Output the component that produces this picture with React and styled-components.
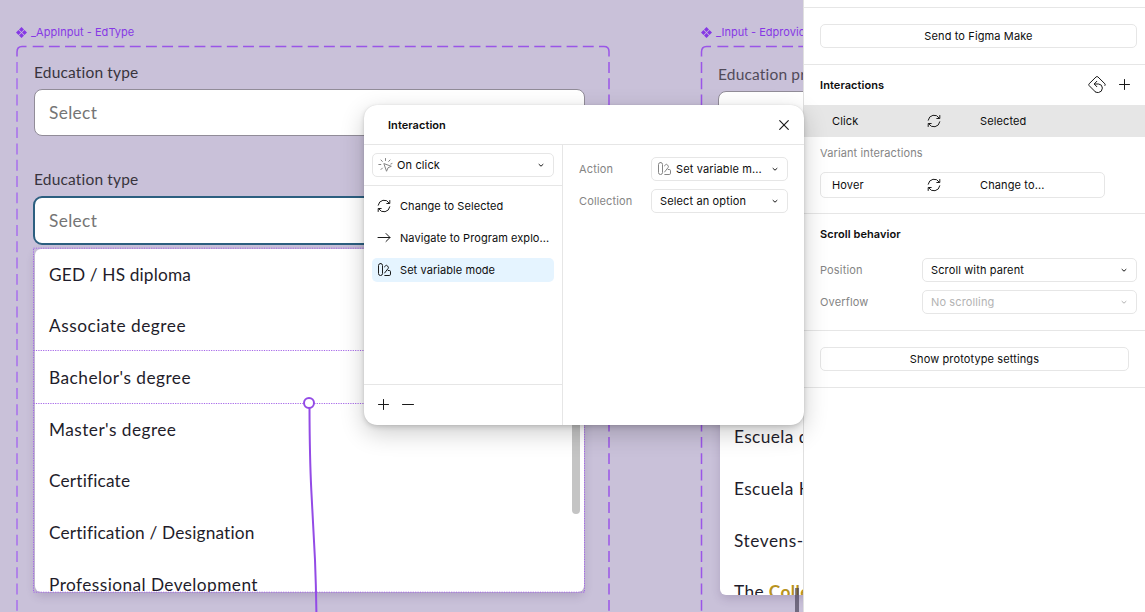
import React from 'react'
import styled, { createGlobalStyle, css } from 'styled-components'

const GlobalStyle = createGlobalStyle`
  * {
    box-sizing: border-box;
  }

  body {
    margin: 0;
    background: #ffffff;
    font-family: Inter, sans-serif;
  }

  svg {
    flex: none;
  }
`

const Editor = styled.div`
  display: flex;
  height: 612px;
  overflow: hidden;
  position: relative;
  width: 1145px;
`

const Canvas = styled.div`
  background-color: #c9c1d9;
  flex: 1;
  min-width: 0;
  overflow: hidden;
  position: relative;
`

// nodes on the free canvas
const Frame = styled.div`
  display: flex;
  flex-direction: column;
  left: ${props => props.$x}px;
  position: absolute;
  top: ${props => props.$y}px;
  width: 552px;
`

const FrameTitle = styled.div`
  align-items: center;
  color: #8638e5;
  display: flex;
  font-size: 11px;
  gap: 4px;
  left: ${props => props.$x}px;
  letter-spacing: 0.03px;
  line-height: 16px;
  position: absolute;
  top: 24px;
  white-space: nowrap;
`

const Overlay = styled.svg`
  height: 612px;
  left: 0;
  pointer-events: none;
  position: absolute;
  top: 0;
  width: 803px;
`

const FieldLabel = styled.div`
  color: ${props => props.$color || '#38343d'};
  font-family: Lato, sans-serif;
  font-size: 15.5px;
  height: 20px;
  letter-spacing: 0.17px;
  line-height: 19px;
  padding-left: 1px;
  white-space: nowrap;
`

const Field = styled.div`
  align-items: center;
  background-color: #ffffff;
  border: 1px solid #918c98;
  border-radius: 8px;
  color: #757575;
  display: flex;
  font-family: Lato, sans-serif;
  font-size: 17.3px;
  height: 47px;
  letter-spacing: 0.35px;
  margin: 6px 0 0 1px;
  padding-left: 14px;
  width: 551px;

  ${props =>
    props.$focused &&
    css`
      border: 2px solid #2c5f80;
      border-radius: 9px;
      height: 49px;
      margin-left: 0;
      width: 552px;
    `}
`

const Menu = styled.div`
  background-color: #ffffff;
  border-radius: 6px;
  box-shadow: 0 4px 10px rgba(60, 40, 90, 0.18);
  display: flex;
  height: ${props => props.$height || 343}px;
  justify-content: space-between;
  margin: 4px 0 0 2px;
  overflow: hidden;
  padding-left: 14px;
  width: 549px;
`

const Options = styled.div`
  display: flex;
  flex-direction: column;
  margin-top: ${props => props.$top || 0}px;
`

const Option = styled.div`
  align-items: center;
  color: #1f1d2b;
  display: flex;
  flex: none;
  font-family: Lato, sans-serif;
  font-size: 17.3px;
  height: 51.67px;
  letter-spacing: ${props => props.$track || 0.4}px;
  white-space: pre;

  b {
    color: #b8931e;
    font-weight: 700;
  }
`

const MenuThumb = styled.div`
  background-color: #c4c4c4;
  border-radius: 4px;
  height: 257px;
  margin: 8px 4px 0 0;
  width: 8px;
`

const CanvasThumb = styled.div`
  background-color: rgba(60, 54, 72, 0.62);
  bottom: 0;
  height: 24px;
  position: absolute;
  right: 4px;
  width: 4px;
`

const Panel = styled.div`
  background-color: #ffffff;
  border-left: 1px solid #e0e0e0;
  color: #0d0d0d;
  display: flex;
  flex-direction: column;
  font-size: 11px;
  letter-spacing: 0.12px;
  padding-top: 7px;
  width: 342px;
`

const Section = styled.div`
  border-top: 1px solid #e6e6e6;
  display: flex;
  flex-direction: column;
  padding: ${props => props.$padding || '0'};
`

const SectionHeader = styled.div`
  align-items: center;
  display: flex;
  font-weight: 600;
  height: 40px;
  justify-content: space-between;
  letter-spacing: 0.08px;
  padding: 0 8px 0 16px;
`

const HeaderActions = styled.div`
  align-items: center;
  display: flex;
  gap: 4px;
`

const Button = styled.div`
  align-items: center;
  border: 1px solid #e6e6e6;
  border-radius: 5px;
  display: flex;
  height: 24px;
  justify-content: center;
  width: ${props => props.$width}px;
`

const InteractionRow = styled.div`
  align-items: center;
  background-color: #e6e6e6;
  display: grid;
  grid-template-columns: 90px 58px 1fr;
  height: 32px;
  padding-left: 28px;

  ${props =>
    props.$outlined &&
    css`
      background-color: #ffffff;
      border: 1px solid #e6e6e6;
      border-radius: 5px;
      height: 26px;
      margin-left: 16px;
      padding-left: 11px;
      width: 285px;
    `}
`

const GroupLabel = styled.div`
  color: #858585;
  height: 35px;
  line-height: 32px;
  padding-left: 16px;
`

const Properties = styled.div`
  align-content: start;
  display: grid;
  grid-template-columns: ${props => props.$columns};
  row-gap: 8px;
  padding: ${props => props.$padding};
`

const PropertyLabel = styled.div`
  color: #858585;
  letter-spacing: 0.15px;
  line-height: 24px;
`

const Select = styled.div`
  align-items: center;
  border: 1px solid #e6e6e6;
  border-radius: 5px;
  color: ${props => (props.$disabled ? '#b3b3b3' : '#0d0d0d')};
  display: flex;
  gap: 4px;
  height: 24px;
  justify-content: space-between;
  letter-spacing: 0.13px;
  padding: 0 8px 0 ${props => (props.$icon ? 4 : 8)}px;
  white-space: nowrap;
`

const SelectText = styled.span`
  flex: 1;
`

const Dialog = styled.div`
  background-color: #ffffff;
  border-radius: 13px;
  box-shadow: 0 8px 24px rgba(0, 0, 0, 0.2), 0 2px 5px rgba(0, 0, 0, 0.15),
    0 0 1px rgba(0, 0, 0, 0.15);
  color: #0d0d0d;
  display: flex;
  flex-direction: column;
  font-size: 11px;
  height: 320px;
  left: 364px;
  letter-spacing: 0.06px;
  position: absolute;
  top: 105px;
  width: 440px;
`

const DialogHeader = styled.div`
  align-items: center;
  border-bottom: 1px solid #e6e6e6;
  display: flex;
  font-weight: 600;
  height: 40px;
  justify-content: space-between;
  padding: 0 14px 0 24px;
`

const DialogBody = styled.div`
  display: flex;
  flex: 1;
`

const ActionColumn = styled.div`
  border-right: 1px solid #e6e6e6;
  display: flex;
  flex-direction: column;
  width: 199px;
`

const Trigger = styled.div`
  border-bottom: 1px solid #e6e6e6;
  padding: 8px;
`

const ActionList = styled.div`
  display: flex;
  flex: 1;
  flex-direction: column;
  gap: 8px;
  padding: 8px;
`

const ActionItem = styled.div`
  align-items: center;
  background-color: ${props => (props.$selected ? '#e5f4ff' : 'transparent')};
  border-radius: 5px;
  display: flex;
  gap: 4px;
  height: 24px;
  letter-spacing: 0.07px;
  white-space: nowrap;
`

const ActionFooter = styled.div`
  align-items: center;
  border-top: 1px solid #e6e6e6;
  display: flex;
  height: 41px;
  padding-left: 8px;
`

const Icon = ({ children, width = 24, height = 24, color = '#1a1a1a' }) => (
  <svg
    width={width}
    height={height}
    viewBox={`0 0 ${width} ${height}`}
    fill="none"
    stroke={color}
    strokeLinecap="round"
    strokeLinejoin="round"
  >
    {children}
  </svg>
)

const Chevron = ({ color }) => (
  <Icon width={8} height={8} color={color}>
    <path d="M2 3.4 4 5.2 6 3.4" />
  </Icon>
)

const SwapIcon = () => (
  <Icon>
    <path d="M6.2 11.2A6 6 0 0 1 17.2 9M17.8 6.5V9.5H14.8M17.8 12.8A6 6 0 0 1 6.8 15M6.2 17.5V14.5H9.2" />
  </Icon>
)

const ArrowIcon = () => (
  <Icon>
    <path d="M6 11.5H18M14 7.5 18 11.5 14 15.5" />
  </Icon>
)

const ModeIcon = ({ color }) => (
  <Icon color={color}>
    <rect x="6.5" y="5.5" width="4" height="12" rx="2" />
    <path d="M12.5 8.8 13.8 7.6Q14.7 6.9 15.4 7.8L16.2 9Q16.7 9.8 16.1 10.5L12.6 15M16.2 12.5H17.3Q18.5 12.5 18.5 13.7V16.2Q18.5 17.5 17.3 17.5H12.8" />
  </Icon>
)

const ClickIcon = () => (
  <Icon color="#858585">
    <path d="M11.2 10.7 18.3 13.3 15.1 14.7 13.7 17.9Z" />
    <path d="M12.5 5.5V7.5M8 7 9.3 8.4M17 7 15.7 8.4M5.8 11.5H7.8M19 10.5 17.8 11M8 16.5 9.4 15.1" />
  </Icon>
)

const PlusIcon = () => (
  <Icon>
    <path d="M11.5 6.5V16.5M6.5 11.5H16.5" />
  </Icon>
)

const MinusIcon = () => (
  <Icon>
    <path d="M6.5 11.5H17.5" />
  </Icon>
)

const CloseIcon = () => (
  <Icon width={12} height={12}>
    <path d="M1.7 1.7 10.3 10.3M10.3 1.7 1.7 10.3" strokeWidth="1.15" />
  </Icon>
)

const ResetIcon = () => (
  <Icon>
    <path d="M10.5 19 4.1 12.6Q3.4 11.7 4.1 10.8L11.1 3.9Q12 3.1 12.9 3.9L19.9 10.8Q20.6 11.7 20 12.5" />
    <path d="M11.8 8.3 9.2 11 11.8 13.7M9.4 11H13.6Q17.4 11.5 17.4 15.1 17.1 19 13.6 19.5 11.8 19.7 10.5 19" />
  </Icon>
)

const ComponentIcon = () => (
  <svg width="11" height="11" viewBox="0 0 11 11" fill="#8638e5">
    <path d="M5.5 0 8 2.5 5.5 5 3 2.5ZM5.5 6 8 8.5 5.5 11 3 8.5ZM2.5 3 5 5.5 2.5 8 0 5.5ZM8.5 3 11 5.5 8.5 8 6 5.5Z" />
  </svg>
)

const degrees = [
  { name: 'GED / HS diploma', track: 0.15 },
  { name: 'Associate degree', track: 0.5 },
  { name: "Bachelor's degree", track: 0.47 },
  { name: "Master's degree", track: 0.45 },
  { name: 'Certificate', track: 0.17 },
  { name: 'Certification / Designation', track: 0.16 },
  { name: 'Professional Development', track: 0.43 }
]

const EducationTypeFrame = () => (
  <>
    <FrameTitle $x={16}>
      <ComponentIcon />
      _AppInput - EdType
    </FrameTitle>
    <Frame $x={33} $y={63}>
      <FieldLabel>Education type</FieldLabel>
      <Field>Select</Field>
    </Frame>
    <Frame $x={33} $y={170}>
      <FieldLabel>Education type</FieldLabel>
      <Field $focused>Select</Field>
      <Menu>
        <Options $top={-0.5}>
          {degrees.map(degree => (
            <Option key={degree.name} $track={degree.track}>
              {degree.name}
            </Option>
          ))}
        </Options>
        <MenuThumb />
      </Menu>
    </Frame>
  </>
)

const ProviderFrame = () => (
  <>
    <FrameTitle $x={701}>
      <ComponentIcon />
      _Input - Edprovider
    </FrameTitle>
    <Frame $x={717} $y={65}>
      <FieldLabel $color="#514b5a">Education provider</FieldLabel>
      <Field />
    </Frame>
    <Frame $x={718} $y={248}>
      <Menu>
        <Options $top={4}>
          <Option>Colorado State</Option>
          <Option>Columbia College</Option>
          <Option>Eastern College</Option>
          <Option>Escuela de Arte</Option>
          <Option>Escuela Hotelera</Option>
          <Option $track={0.55}>Stevens-Henager</Option>
          <Option>
            The <b>College</b>
          </Option>
        </Options>
      </Menu>
    </Frame>
  </>
)

const Guides = () => (
  <Overlay viewBox="0 0 803 612" fill="none" stroke="#9747ff">
    <g strokeWidth="1.5" stroke="#9a55e8" strokeDasharray="10.9 5.28">
      <path d="M32.7 46.4H594" />
      <path d="M717.4 46.4H803" />
      <path d="M609 62V612" strokeDasharray="10.9 5.4" />
      <path d="M701.5 62V612" strokeDasharray="10.9 5.4" />
      <path d="M17 62V612" strokeWidth="2" stroke="#b083e8" strokeDasharray="10.9 5.4" />
    </g>
    <g strokeWidth="1.5" stroke="#9a55e8">
      <path d="M17 56.6V52Q17 46.4 22 46.4H26.5" />
      <path d="M599 46.4H604Q609 46.4 609 51.5V56.6" />
      <path d="M701.5 56.6V52Q701.5 46.4 706.5 46.4H711" />
    </g>
    <g strokeWidth="1" stroke="#a566e8" strokeDasharray="1.2 1.2">
      <path d="M33.5 248.2H584.5V592.2H33.5Z" />
      <path d="M33.5 350.5H584.5M33.5 403.5H584.5" />
    </g>
    <path
      d="M309.5 408C309.6 440 310.3 470 311.3 490L315 560Q316 585 316.4 612"
      strokeWidth="2"
      stroke="#934be6"
    />
    <circle cx="309" cy="403" r="5" fill="#ffffff" strokeWidth="2" stroke="#934be6" />
  </Overlay>
)

const PrototypePanel = () => (
  <Panel>
    <Section $padding="16px">
      <Button $width={317}>Send to Figma Make</Button>
    </Section>
    <Section $padding="0 0 15px">
      <SectionHeader>
        Interactions
        <HeaderActions>
          <ResetIcon />
          <PlusIcon />
        </HeaderActions>
      </SectionHeader>
      <InteractionRow>
        <span>Click</span>
        <SwapIcon />
        <span>Selected</span>
      </InteractionRow>
      <GroupLabel>Variant interactions</GroupLabel>
      <InteractionRow $outlined>
        <span>Hover</span>
        <SwapIcon />
        <span>Change to...</span>
      </InteractionRow>
    </Section>
    <Section>
      <SectionHeader>Scroll behavior</SectionHeader>
      <Properties $columns="102px 215px" $padding="4px 0 16px 16px">
        <PropertyLabel>Position</PropertyLabel>
        <Select>
          <SelectText>Scroll with parent</SelectText>
          <Chevron />
        </Select>
        <PropertyLabel>Overflow</PropertyLabel>
        <Select $disabled>
          <SelectText>No scrolling</SelectText>
          <Chevron color="#b3b3b3" />
        </Select>
      </Properties>
    </Section>
    <Section $padding="16px">
      <Button $width={309}>Show prototype settings</Button>
    </Section>
    <Section />
  </Panel>
)

const InteractionDialog = () => (
  <Dialog>
    <DialogHeader>
      Interaction
      <CloseIcon />
    </DialogHeader>
    <DialogBody>
      <ActionColumn>
        <Trigger>
          <Select $icon>
            <Icon width={16} height={24}>
              <g transform="translate(-4 0)">
                <ClickIcon />
              </g>
            </Icon>
            <SelectText>On click</SelectText>
            <Chevron />
          </Select>
        </Trigger>
        <ActionList>
          <ActionItem>
            <SwapIcon />
            Change to Selected
          </ActionItem>
          <ActionItem>
            <ArrowIcon />
            Navigate to Program explo...
          </ActionItem>
          <ActionItem $selected>
            <ModeIcon />
            Set variable mode
          </ActionItem>
        </ActionList>
        <ActionFooter>
          <PlusIcon />
          <MinusIcon />
        </ActionFooter>
      </ActionColumn>
      <Properties $columns="72px 137px" $padding="12px 0 0 16px">
        <PropertyLabel>Action</PropertyLabel>
        <Select $icon>
          <Icon width={16} height={24}>
            <g transform="translate(-4 0)">
              <ModeIcon color="#858585" />
            </g>
          </Icon>
          <SelectText>Set variable m...</SelectText>
          <Chevron />
        </Select>
        <PropertyLabel>Collection</PropertyLabel>
        <Select>
          <SelectText>Select an option</SelectText>
          <Chevron />
        </Select>
      </Properties>
    </DialogBody>
  </Dialog>
)

const App = () => {
  return (
    <>
      <GlobalStyle />
      <Editor>
        <Canvas>
          <EducationTypeFrame />
          <ProviderFrame />
          <Guides />
          <CanvasThumb />
        </Canvas>
        <PrototypePanel />
        <InteractionDialog />
      </Editor>
    </>
  )
}

export default App
